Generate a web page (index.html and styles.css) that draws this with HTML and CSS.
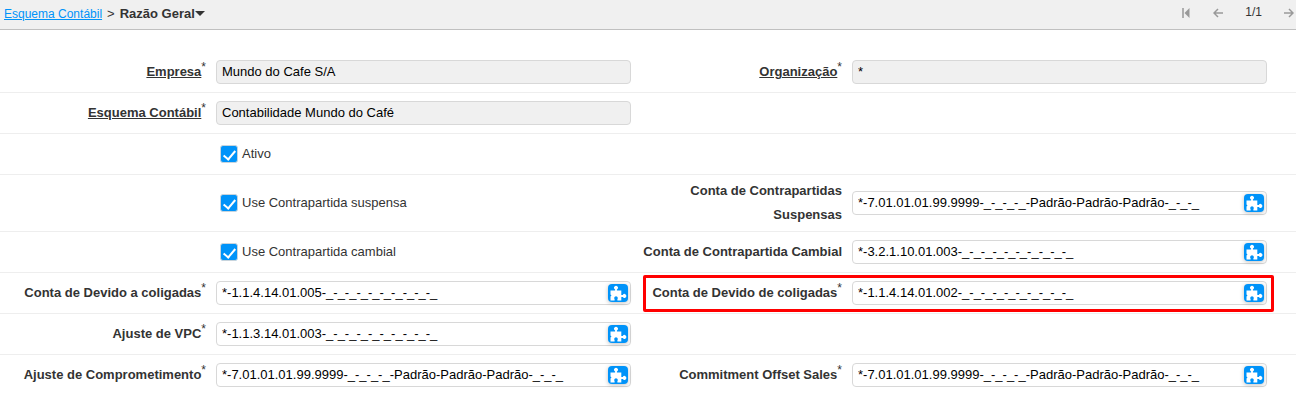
FILE: index.html
```html
<!DOCTYPE html>
<html lang="pt-BR">
<head>
    <meta charset="UTF-8">
    <meta name="viewport" content="width=device-width, initial-scale=1.0">
    <title>Razão Geral</title>
    <link rel="stylesheet" href="styles.css">
</head>
<body>
    <!-- Puzzle icon shared by all account fields -->
    <svg class="sprite" aria-hidden="true">
        <symbol id="puzzle" viewBox="0 0 20 18">
            <path d="M2.500 6.500h4.600V5.400a1.900 1.900 0 1 1 1.800 0V6.500H13.300V11h1.500a1.900 1.900 0 1 1 0 1.900H13.300V16.500H9.400v-1.200a1.800 1.800 0 1 0-2.800 0v1.200H2.500V12.500l1-1-1-1z" fill="#fff"/>
        </symbol>
    </svg>

    <header class="toolbar">
        <nav class="breadcrumb">
            <a href="#">Esquema Contábil</a>
            <span class="separator">&gt;</span>
            <button type="button" class="current">Razão Geral<span class="caret"></span></button>
        </nav>
        <div class="pager">
            <button type="button" aria-label="Primeiro">
                <svg width="10" height="10" viewBox="0 0 10 10"><path d="M2 0v10" stroke="#999" stroke-width="1.500"/><path d="M8.500 0v10L3.500 5z" fill="#999"/></svg>
            </button>
            <button type="button" aria-label="Anterior">
                <svg width="10" height="10" viewBox="0 0 10 10"><path d="M10 5H1.500M5 1L1 5l4 4" fill="none" stroke="#999" stroke-width="1.500"/></svg>
            </button>
            <span class="count">1/1</span>
            <button type="button" aria-label="Próximo">
                <svg width="10" height="10" viewBox="0 0 10 10"><path d="M0 5h8.500M5 1l4 4-4 4" fill="none" stroke="#999" stroke-width="1.500"/></svg>
            </button>
        </div>
    </header>

    <form class="form">
        <div class="row">
            <div class="pair">
                <label class="label" for="empresa"><u>Empresa</u><sup>*</sup></label>
                <div class="field"><input type="text" id="empresa" value="Mundo do Cafe S/A" readonly></div>
            </div>
            <div class="pair">
                <label class="label" for="organizacao"><u>Organização</u><sup>*</sup></label>
                <div class="field"><input type="text" id="organizacao" value="*" readonly></div>
            </div>
        </div>

        <div class="row">
            <div class="pair">
                <label class="label" for="esquema"><u>Esquema Contábil</u><sup>*</sup></label>
                <div class="field"><input type="text" id="esquema" value="Contabilidade Mundo do Café" readonly></div>
            </div>
        </div>

        <div class="row">
            <div class="pair">
                <label class="check"><input type="checkbox" checked>Ativo</label>
            </div>
        </div>

        <div class="row">
            <div class="pair">
                <label class="check"><input type="checkbox" checked>Use Contrapartida suspensa</label>
            </div>
            <div class="pair">
                <label class="label" for="suspensas">Conta de Contrapartidas Suspensas</label>
                <div class="field">
                    <input type="text" id="suspensas" value="*-7.01.01.01.99.9999-_-_-_-_-Padrão-Padrão-Padrão-_-_-_">
                    <button type="button" aria-label="Conta"><svg><use href="#puzzle"/></svg></button>
                </div>
            </div>
        </div>

        <div class="row">
            <div class="pair">
                <label class="check"><input type="checkbox" checked>Use Contrapartida cambial</label>
            </div>
            <div class="pair">
                <label class="label" for="cambial">Conta de Contrapartida Cambial</label>
                <div class="field">
                    <input type="text" id="cambial" value="*-3.2.1.10.01.003-_-_-_-_-_-_-_-_-_-_">
                    <button type="button" aria-label="Conta"><svg><use href="#puzzle"/></svg></button>
                </div>
            </div>
        </div>

        <div class="row">
            <div class="pair">
                <label class="label" for="devido-a">Conta de Devido a coligadas<sup>*</sup></label>
                <div class="field">
                    <input type="text" id="devido-a" value="*-1.1.4.14.01.005-_-_-_-_-_-_-_-_-_-_">
                    <button type="button" aria-label="Conta"><svg><use href="#puzzle"/></svg></button>
                </div>
            </div>
            <div class="pair highlight">
                <label class="label" for="devido-de">Conta de Devido de coligadas<sup>*</sup></label>
                <div class="field">
                    <input type="text" id="devido-de" value="*-1.1.4.14.01.002-_-_-_-_-_-_-_-_-_-_">
                    <button type="button" aria-label="Conta"><svg><use href="#puzzle"/></svg></button>
                </div>
            </div>
        </div>

        <div class="row">
            <div class="pair">
                <label class="label" for="vpc">Ajuste de VPC<sup>*</sup></label>
                <div class="field">
                    <input type="text" id="vpc" value="*-1.1.3.14.01.003-_-_-_-_-_-_-_-_-_-_">
                    <button type="button" aria-label="Conta"><svg><use href="#puzzle"/></svg></button>
                </div>
            </div>
        </div>

        <div class="row">
            <div class="pair">
                <label class="label" for="comprometimento">Ajuste de Comprometimento<sup>*</sup></label>
                <div class="field">
                    <input type="text" id="comprometimento" value="*-7.01.01.01.99.9999-_-_-_-_-Padrão-Padrão-Padrão-_-_-_">
                    <button type="button" aria-label="Conta"><svg><use href="#puzzle"/></svg></button>
                </div>
            </div>
            <div class="pair">
                <label class="label" for="offset-sales">Commitment Offset Sales<sup>*</sup></label>
                <div class="field">
                    <input type="text" id="offset-sales" value="*-7.01.01.01.99.9999-_-_-_-_-Padrão-Padrão-Padrão-_-_-_">
                    <button type="button" aria-label="Conta"><svg><use href="#puzzle"/></svg></button>
                </div>
            </div>
        </div>
    </form>
</body>
</html>
```

FILE: styles.css
```css
* {
    margin: 0;
    padding: 0;
    box-sizing: border-box;
}

body {
    font-family: "Liberation Sans", Arial, Helvetica, sans-serif;
    font-size: 13px;
    line-height: 24px;
    color: #333;
    background: #fff;
}

input,
button {
    font: inherit;
    color: inherit;
}

button {
    border: none;
    background: none;
    cursor: pointer;
}

.sprite {
    display: none;
}

/* Toolbar */
.toolbar {
    display: flex;
    justify-content: space-between;
    height: 30px;
    padding: 0 2px 0 4px;
    background: #f0f0f0;
    border-bottom: 1px solid #c0c0c0;
}

.breadcrumb {
    display: flex;
    align-items: center;
    gap: 5px;
    padding-bottom: 2px;
}

.breadcrumb a {
    font-size: 12px;
    color: #0093f9;
}

.current {
    display: flex;
    align-items: center;
    font-weight: bold;
}

.caret {
    border: 5px solid transparent;
    border-top-color: #333;
    border-bottom: none;
}

.pager {
    display: flex;
    align-items: center;
    gap: 22px;
    padding-bottom: 6px;
}

.pager button {
    display: flex;
    padding-top: 2px;
}

.count {
    font-size: 12px;
}

/* Form rows */
.form {
    padding-top: 22px;
}

.row {
    display: grid;
    grid-template-columns: 1fr 1fr;
    padding-right: 24px;
    border-bottom: 1px solid #eee;
}

.row:last-child {
    border-bottom: none;
}

.pair {
    position: relative;
    display: grid;
    grid-template-columns: 1fr 2fr;
    align-items: center;
    min-height: 40px;
    padding: 4px 0;
}

.label {
    padding: 0 6px 0 4px;
    font-weight: bold;
    text-align: right;
}

.label sup {
    font-size: 12px;
    font-weight: normal;
    line-height: 1;
    vertical-align: 5px;
}

.field {
    position: relative;
    padding: 0 5px 0 4px;
}

.field input {
    display: block;
    width: 100%;
    height: 24px;
    padding: 0 28px 0 5px;
    color: #000;
    background: #fff;
    border: 1px solid #d8d8d8;
    border-radius: 4px;
}

.field input:read-only {
    background: #f0f0f0;
}

.field button {
    position: absolute;
    top: 3px;
    right: 8px;
    width: 20px;
    height: 18px;
    background: #0093f9;
    border-radius: 4px;
    box-shadow: 0 1px 4px rgba(0, 0, 0, 0.25);
}

.field svg {
    display: block;
    width: 20px;
    height: 18px;
}

.check {
    grid-column: 2;
    display: flex;
    align-items: center;
    gap: 4px;
    padding-left: 8px;
}

.check input {
    appearance: none;
    display: flex;
    justify-content: center;
    width: 18px;
    height: 18px;
    padding-top: 2px;
    background: #0093f9;
    border: 1px solid #c8d4dc;
    border-radius: 3px;
}

.check input:checked::after {
    content: "";
    width: 5px;
    height: 10px;
    border: solid #fff;
    border-width: 0 2px 2px 0;
    transform: rotate(40deg);
}

/* Red frame around the highlighted account */
.highlight::after {
    content: "";
    position: absolute;
    inset: 2px -2px 1px 7px;
    border: 3px solid #ff0000;
    border-radius: 2px;
    pointer-events: none;
}
```
